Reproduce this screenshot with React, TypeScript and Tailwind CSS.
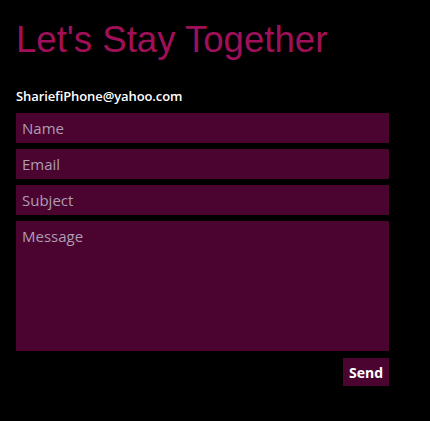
import React from "react";

export default function App() {
  const field =
    "block w-full h-[30px] bg-[#4b0430] text-[15px] font-medium text-[#c7b8c4] px-[6px] outline-none placeholder:text-[#ab9db3]";
  return (
    <div className="w-[430px] h-[421px] bg-black" style={{ fontFamily: "'Liberation Sans', Arial, sans-serif" }}>
      <div className="pl-4 pt-[19px] w-[389px]">
        <h1 className="text-[36.6px] leading-[42px] text-[#a0105a] font-normal" style={{ fontFamily: "'Liberation Sans', Arial, sans-serif" }}>
          Let's Stay Together
        </h1>
        <p
          className="mt-[27px] text-[13px] leading-[16px] text-white font-semibold tracking-[-0.1px]"
          style={{ fontFamily: "'Open Sans', 'DejaVu Sans', sans-serif" }}
        >
          ShariefiPhone@yahoo.com
        </p>
        <form
          className="mt-[9px] flex flex-col gap-[6px]"
          style={{ fontFamily: "'Open Sans', 'DejaVu Sans', sans-serif" }}
          onSubmit={(e) => e.preventDefault()}
        >
          <input className={field} placeholder="Name" />
          <input className={field} placeholder="Email" />
          <input className={field} placeholder="Subject" />
          <textarea
            className="block w-full h-[130px] bg-[#4b0430] text-[15px] font-medium text-[#c7b8c4] px-[6px] py-[4px] outline-none resize-none placeholder:text-[#ab9db3]"
            placeholder="Message"
          />
          <div className="flex justify-end mt-[1px]">
            <button className="w-[46px] h-[28px] bg-[#4b0430] text-white text-[14px] font-bold">
              Send
            </button>
          </div>
        </form>
      </div>
    </div>
  );
}
